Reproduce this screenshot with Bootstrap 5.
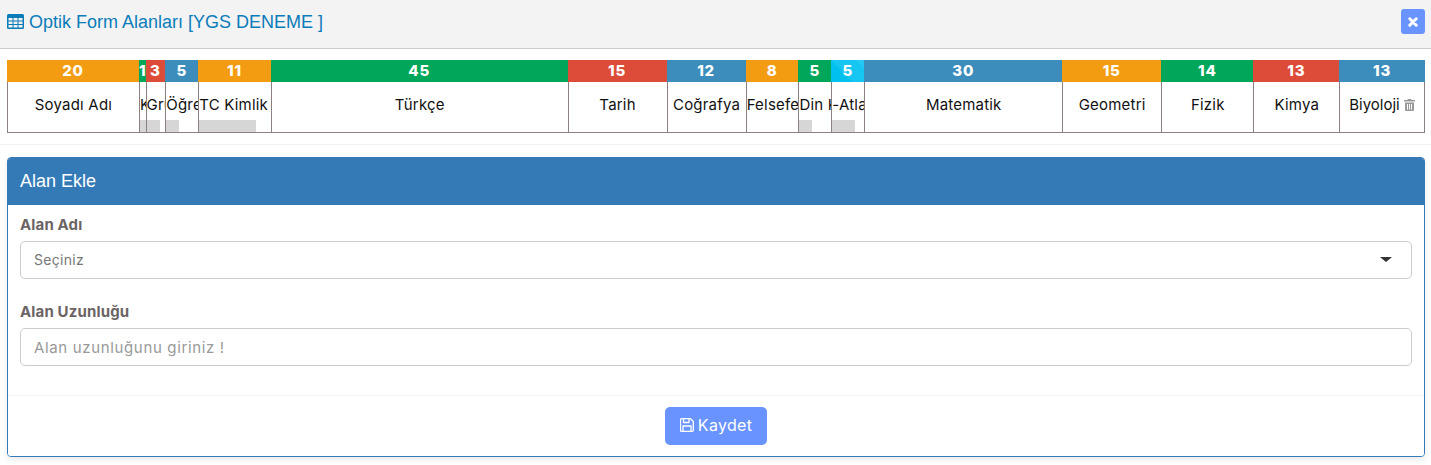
<!DOCTYPE html>
<html lang="tr">
<head>
<meta charset="utf-8">
<title>Optik Form Alanları</title>
<link href="https://cdn.jsdelivr.net/npm/bootstrap@5.3.0/dist/css/bootstrap.min.css" rel="stylesheet">
<style>
html, body { height: 465px; overflow: hidden; }
body { font-family: "Inter", "Noto Sans", sans-serif; font-size: 14px; color: #111; background: #fff; }
.title-bar { height: 49px; background: #f3f3f3; border-bottom: 1px solid #ccc; padding: 0 6px 0 7px; }
.title-text { font-family: "Liberation Sans", Arial, sans-serif; font-size: 18px; color: #0b7cba; margin: 0; line-height: 1; font-weight: 400; padding-bottom: 5px; }
.title-text svg { vertical-align: -1px; }
.close-box { width: 24px; height: 25px; background: #6993ff; border-radius: 3px; border: 0; padding: 0; margin-top: -5px; }
.page-pad { padding: 11px 6px 0 7px; }
.strip { height: 73px; }
.seg { min-width: 0; }
.seg-num { height: 22px; line-height: 22px; color: #fff; font-weight: 800; font-size: 15px; letter-spacing: .8px; text-align: center; overflow: hidden; white-space: nowrap; }
.seg-body { height: 51px; border-style: solid; border-color: #8c8080; border-width: 0 0 1px 1px; overflow: hidden; text-align: center; white-space: nowrap; font-size: 15px; letter-spacing: .2px; }
.seg:last-child .seg-body { border-right-width: 1px; letter-spacing: 0; }
.seg-text { height: 38px; line-height: 46px; overflow: hidden; }
.seg-thumb { height: 12px; background: #d6d6d6; }
.c-orange { background: #f39c12; }
.c-green { background: #00a65a; }
.c-red { background: #dd4b39; }
.c-blue { background: #3c8dbc; }
.c-aqua { background: linear-gradient(45deg, #00c0ef 0 40%, #14c6f1 40% 84%, #23c9f2 84%); }
.soft-rule { margin: 11px -7px 12px; border: 0; border-top: 1px solid #f3f3f3; opacity: 1; }
.form-panel { height: 300px; border: 1px solid #337ab7; border-radius: 4px; box-shadow: 0 3px 6px rgba(0,0,0,.08); }
.form-panel .card-header { height: 47px; background: #337ab7; border: 0; color: #fff; font-family: "Liberation Sans", Arial, sans-serif; font-size: 18px; padding: 0 12px; line-height: 47px; border-radius: 3px 3px 0 0; }
.form-panel .card-body { padding: 9px 12px 0; }
.fld-label { font-weight: 700; font-size: 15px; letter-spacing: .15px; color: #6b6464; margin-bottom: 6px; line-height: 21px; display: block; }
.fld-select, .fld-input { height: 38px; border: 1px solid #ccc; border-radius: 5px; padding: 0 13px; font-size: 14px; color: #777; letter-spacing: .3px; box-shadow: none; }
.fld-select { display: flex; align-items: center; justify-content: space-between; margin-bottom: 22px; padding-right: 19px; padding-bottom: 2px; }
.fld-input { font-size: 15px; letter-spacing: .65px; }
.fld-input::placeholder { color: #999; opacity: 1; }
.caret-shape { width: 0; height: 0; border-style: solid; border-width: 5px 6px 0 6px; border-color: #333 transparent transparent transparent; }
.form-panel .card-footer { height: 61px; background: #fff; border-top: 1px solid #f3f3f3; padding: 11px 0 0; text-align: center; border-radius: 0 0 3px 3px; }
.save-btn { width: 102px; height: 38px; background: #6993ff; border: 0; border-radius: 5px; color: #fff; font-size: 16px; letter-spacing: .3px; padding: 0 0 2px; }
.save-btn svg { vertical-align: -1px; margin-right: 4px; }
.trash-ic { vertical-align: -1px; }
</style>
</head>
<body>
<div class="title-bar d-flex align-items-center justify-content-between">
  <h1 class="title-text">
    <svg width="17" height="15" viewBox="0 0 17 15"><path fill="#0b7cba" fill-rule="evenodd" d="M1.500 0h14A1.500 1.500 0 0 1 17 1.500v12a1.500 1.500 0 0 1-1.500 1.500h-14A1.500 1.500 0 0 1 0 13.500v-12A1.500 1.500 0 0 1 1.500 0zM1.500 4v2.500h4V4zM6.500 4v2.500h4V4zM11.500 4v2.500h4V4zM1.500 7.500V10h4V7.500zM6.500 7.500V10h4V7.500zM11.500 7.500V10h4V7.500zM1.500 11v2.500h4V11zM6.500 11v2.500h4V11zM11.500 11v2.500h4V11z"/></svg>
    Optik Form Alanları [YGS DENEME ]
  </h1>
  <button class="close-box d-flex align-items-center justify-content-center" type="button" aria-label="Kapat">
    <svg width="10" height="10" viewBox="0 0 10 10"><path d="M1.800 1.800l6.400 6.400M8.200 1.800l-6.400 6.400" stroke="#fff" stroke-width="3" stroke-linecap="round"/></svg>
  </button>
</div>
<div class="page-pad">
  <div class="strip d-flex">
    <div class="seg" style="width:9.3023%"><div class="seg-num c-orange">20</div><div class="seg-body"><div class="seg-text">Soyadı Adı</div></div></div>
    <div class="seg" style="width:.4651%"><div class="seg-num c-green">1</div><div class="seg-body"><div class="seg-text">Kitapçık</div><div class="seg-thumb"></div></div></div>
    <div class="seg" style="width:1.3953%"><div class="seg-num c-red">3</div><div class="seg-body"><div class="seg-text">Grup</div><div class="seg-thumb" style="width:13px"></div></div></div>
    <div class="seg" style="width:2.3256%"><div class="seg-num c-blue">5</div><div class="seg-body"><div class="seg-text">Öğrenci No</div><div class="seg-thumb" style="width:13px"></div></div></div>
    <div class="seg" style="width:5.1163%"><div class="seg-num c-orange">11</div><div class="seg-body"><div class="seg-text">TC Kimlik No</div><div class="seg-thumb" style="width:57px"></div></div></div>
    <div class="seg" style="width:20.9302%"><div class="seg-num c-green">45</div><div class="seg-body"><div class="seg-text">Türkçe</div></div></div>
    <div class="seg" style="width:6.9767%"><div class="seg-num c-red">15</div><div class="seg-body"><div class="seg-text">Tarih</div></div></div>
    <div class="seg" style="width:5.5814%"><div class="seg-num c-blue">12</div><div class="seg-body"><div class="seg-text">Coğrafya</div></div></div>
    <div class="seg" style="width:3.7209%"><div class="seg-num c-orange">8</div><div class="seg-body"><div class="seg-text">Felsefe</div></div></div>
    <div class="seg" style="width:2.3256%"><div class="seg-num c-green">5</div><div class="seg-body"><div class="seg-text">Din Kültürü</div><div class="seg-thumb" style="width:13px"></div></div></div>
    <div class="seg" style="width:2.3256%"><div class="seg-num c-aqua">5</div><div class="seg-body"><div class="seg-text">-Atlama</div><div class="seg-thumb" style="width:23px"></div></div></div>
    <div class="seg" style="width:13.9535%"><div class="seg-num c-blue">30</div><div class="seg-body"><div class="seg-text">Matematik</div></div></div>
    <div class="seg" style="width:6.9767%"><div class="seg-num c-orange">15</div><div class="seg-body"><div class="seg-text">Geometri</div></div></div>
    <div class="seg" style="width:6.5116%"><div class="seg-num c-green">14</div><div class="seg-body"><div class="seg-text">Fizik</div></div></div>
    <div class="seg" style="width:6.0465%"><div class="seg-num c-red">13</div><div class="seg-body"><div class="seg-text">Kimya</div></div></div>
    <div class="seg" style="width:6.0465%"><div class="seg-num c-blue">13</div><div class="seg-body"><div class="seg-text">Biyoloji <svg class="trash-ic" width="11" height="12" viewBox="0 0 11 12"><path fill="#999" fill-rule="evenodd" d="M4 0h3l.7 1H11v1.500H0V1h3.300zM1 3.500h9V11a1 1 0 0 1-1 1H2a1 1 0 0 1-1-1zM3 5v5.500h1V5zM5 5v5.500h1V5zM7 5v5.500h1V5z"/></svg></div></div></div>
  </div>
  <hr class="soft-rule">
  <div class="card form-panel">
    <div class="card-header">Alan Ekle</div>
    <div class="card-body">
      <label class="fld-label">Alan Adı</label>
      <div class="fld-select"><span>Seçiniz</span><i class="caret-shape"></i></div>
      <label class="fld-label" for="uz">Alan Uzunluğu</label>
      <input id="uz" class="form-control fld-input" type="text" placeholder="Alan uzunluğunu giriniz !">
    </div>
    <div class="card-footer">
      <button class="btn save-btn" type="button">
        <svg width="14" height="14" viewBox="0 0 14 14"><path fill="none" stroke="#fff" stroke-width="1.300" d="M1.500.7h9l2.800 2.800v8.800a1 1 0 0 1-1 1H1.500a1 1 0 0 1-1-1V1.700a1 1 0 0 1 1-1zM3.500.7v3.800h5.500V.7M3 13.300V8h8v5.300"/></svg>Kaydet
      </button>
    </div>
  </div>
</div>
<script src="https://cdn.jsdelivr.net/npm/bootstrap@5.3.0/dist/js/bootstrap.bundle.min.js"></script>
</body>
</html>
